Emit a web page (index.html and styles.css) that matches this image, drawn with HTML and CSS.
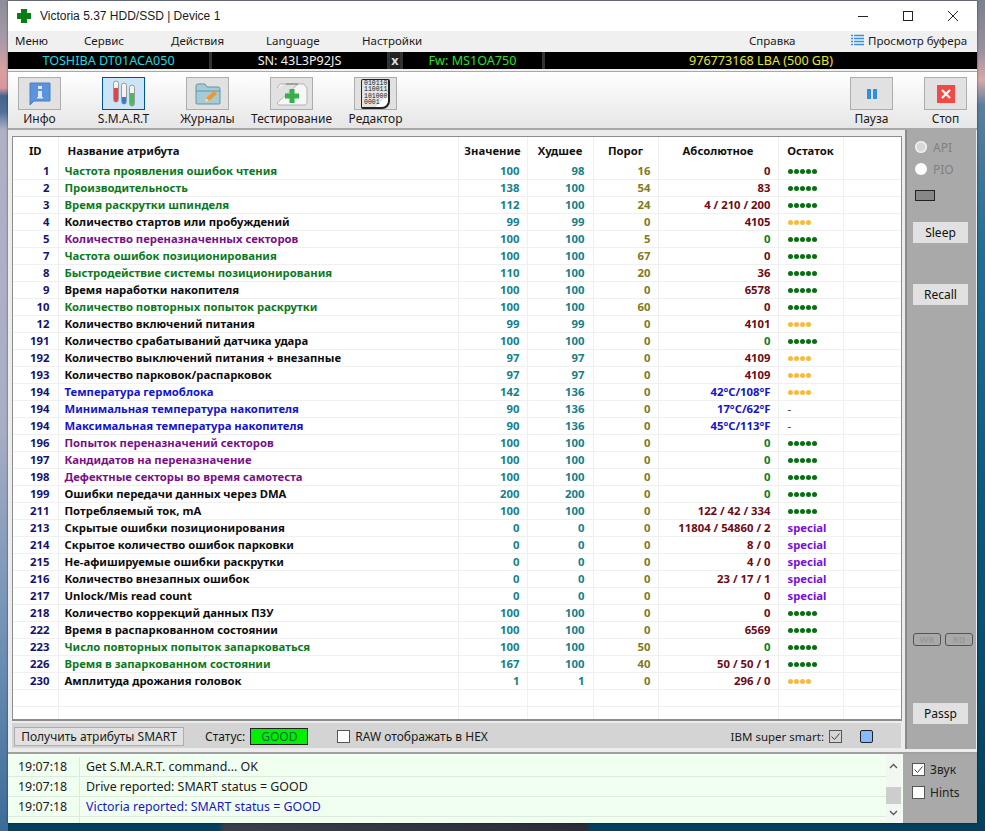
FILE: index.html
```html
<!doctype html>
<html>
  <head>
    <meta charset="utf-8">
    <title>Victoria 5.37 HDD/SSD | Device 1</title>
    <link rel="stylesheet" href="styles.css">
  </head>
  <body>
    <div class="window">
      <div class="titlebar">
        <svg class="app-icon" width="16" height="16" viewBox="0 0 16 16"><path d="M5 1h6v4h4v6h-4v4H5v-4H1V5h4z" fill="#0a7d14"/></svg>
        <span class="title-text">Victoria 5.37 HDD/SSD | Device 1</span>
        <div class="win-buttons">
          <svg width="12" height="12" viewBox="0 0 12 12"><path d="M1 6.5h10" stroke="#222" fill="none"/></svg>
          <svg width="12" height="12" viewBox="0 0 12 12"><rect x="1.5" y="1.5" width="9" height="9" stroke="#222" fill="none"/></svg>
          <svg width="12" height="12" viewBox="0 0 12 12"><path d="M1 1l10 10M11 1L1 11" stroke="#222" fill="none"/></svg>
        </div>
      </div>

      <div class="menubar">
        <span class="m-menu">Меню</span>
        <span class="m-service">Сервис</span>
        <span class="m-actions">Действия</span>
        <span class="m-lang">Language</span>
        <span class="m-settings">Настройки</span>
        <span class="m-help">Справка</span>
        <svg class="buffer-icon" width="13" height="13" viewBox="0 0 13 13"><path d="M0 1.5h2M3 1.5h10M0 4.5h2M3 4.5h10M0 7.5h2M3 7.5h10M0 10.5h2M3 10.5h10" stroke="#3a8fe0" stroke-width="1.4" fill="none"/></svg>
        <span>Просмотр буфера</span>
      </div>

      <div class="drivebar">
        <div class="d-model">TOSHIBA DT01ACA050</div>
        <div class="d-serial">SN: 43L3P92JS</div>
        <div class="d-x">x</div>
        <div class="d-fw">Fw: MS1OA750</div>
        <div class="d-lba">976773168 LBA (500 GB)</div>
      </div>

      <div class="toolbar">
        <div class="tool tool-info">
          <div class="tool-btn">
            <svg width="22" height="24" viewBox="0 0 22 24"><path d="M1 1h20v18H5l-4 4z" fill="#5b93dc" stroke="#4a7fc4"/><rect x="9" y="4" width="4" height="3" fill="#dce9f8"/><rect x="9" y="9" width="4" height="7" fill="#dce9f8"/><rect x="8" y="15" width="6" height="1.5" fill="#dce9f8"/></svg>
          </div>
          <span>Инфо</span>
        </div>
        <div class="tool tool-smart">
          <div class="tool-btn active">
            <svg width="24" height="28" viewBox="0 0 24 28">
              <rect x="1.5" y="1" width="5" height="21" rx="2.5" fill="#f4f4f4" stroke="#9a9a9a"/>
              <path d="M2 8h4v12a2 2 0 0 1-4 0z" fill="#e0454a"/>
              <rect x="9.5" y="3" width="5" height="21" rx="2.5" fill="#f4f4f4" stroke="#9a9a9a"/>
              <path d="M10 17h4v5a2 2 0 0 1-4 0z" fill="#2f7fd8"/>
              <rect x="17.500" y="5" width="5" height="21" rx="2.5" fill="#f4f4f4" stroke="#9a9a9a"/>
              <path d="M18 13h4v11a2 2 0 0 1-4 0z" fill="#4fb85a"/>
            </svg>
          </div>
          <span>S.M.A.R.T</span>
        </div>
        <div class="tool tool-logs">
          <div class="tool-btn">
            <svg width="26" height="24" viewBox="0 0 26 24">
              <path d="M1 4q0-2 2-2h7l2 3h11q2 0 2 2v14q0 1-1 1H2q-1 0-1-1z" fill="#a6cbd6" stroke="#5d97a8"/>
              <path d="M1 9h24" stroke="#5d97a8"/>
              <path d="M10 20l1-4 8-7 3 3-8 7z" fill="#f2962f"/>
              <path d="M10 20l1-4 3 3z" fill="#fbe0b4"/>
            </svg>
          </div>
          <span>Журналы</span>
        </div>
        <div class="tool tool-test">
          <div class="tool-btn">
            <svg width="32" height="26" viewBox="0 0 32 26">
              <path d="M1 7l3-4h6M22 3h6l3 4v15l-2 2H3l-2-2z" fill="#f6f6f6" stroke="#9c9c9c" stroke-width=".7"/>
              <path d="M10 3h12" stroke="#777" stroke-width="1.2"/>
              <path d="M13.500 8h5v4.500H23v5h-4.500V22h-5v-4.500H9v-5h4.500z" fill="#35b04a"/>
            </svg>
          </div>
          <span>Тестирование</span>
        </div>
        <div class="tool tool-editor">
          <div class="tool-btn">
            <div class="hex-sheet">010110<br>110011<br>101000<br>0001</div>
          </div>
          <span>Редактор</span>
        </div>
        <div class="tool tool-pause">
          <div class="tool-btn">
            <svg width="12" height="12" viewBox="0 0 12 12"><path d="M1 1h4v10H1zM7 1h4v10H7z" fill="#2f8fe0"/></svg>
          </div>
          <span>Пауза</span>
        </div>
        <div class="tool tool-stop">
          <div class="tool-btn">
            <svg width="18" height="18" viewBox="0 0 18 18"><rect width="18" height="18" fill="#ef4a45"/><path d="M5 5l8 8M13 5l-8 8" stroke="#fff" stroke-width="2.200"/></svg>
          </div>
          <span>Стоп</span>
        </div>
      </div>

      <div class="main">
        <div class="left-col">
          <div class="table-wrap">
            <table class="smart">
              <colgroup>
                <col class="c-id"><col class="c-name"><col class="c-val"><col class="c-worst"><col class="c-thr"><col class="c-raw"><col class="c-rest"><col>
              </colgroup>
              <thead>
                <tr><th>ID</th><th class="h-name">Название атрибута</th><th>Значение</th><th>Худшее</th><th>Порог</th><th>Абсолютное</th><th>Остаток</th><th class="h-end"></th></tr>
              </thead>
              <tbody id="rows"></tbody>
            </table>
          </div>
          <div class="statusrow">
            <button class="get-btn">Получить атрибуты SMART</button>
            <span class="status-label">Статус:</span>
            <span class="status-good">GOOD</span>
            <label class="hex-check"><span class="box"></span>RAW отображать в HEX</label>
            <label class="ibm-check">IBM super smart:<span class="box checked small"><svg width="13" height="13" viewBox="0 0 13 13"><path d="M2.500 6.500l3 3 5-6" stroke="#444" fill="none"/></svg></span></label>
            <span class="blue-swatch"></span>
          </div>
        </div>
        <div class="sidepanel">
          <div class="radio-row"><span class="radio dim"></span>API</div>
          <div class="radio-row"><span class="radio"></span>PIO</div>
          <div class="led"></div>
          <div class="side-btn sleep">Sleep</div>
          <div class="side-btn recall">Recall</div>
          <div class="wr-rd"><span>WR</span><span>RD</span></div>
          <div class="side-btn passp">Passp</div>
        </div>
      </div>

      <div class="bottom">
        <div class="log">
          <div class="log-lines">
            <div class="log-line"><span class="log-time">19:07:18</span><span class="log-msg">Get S.M.A.R.T. command... OK</span></div>
            <div class="log-line"><span class="log-time">19:07:18</span><span class="log-msg">Drive reported: SMART status = GOOD</span></div>
            <div class="log-line"><span class="log-time">19:07:18</span><span class="log-msg blue">Victoria reported: SMART status = GOOD</span></div>
            <div class="log-line"><span class="log-time"></span><span class="log-msg"></span></div>
          </div>
          <div class="scrollbar">
            <svg width="9" height="6" viewBox="0 0 9 6"><path d="M1 5l3.500-3.500L8 5" stroke="#555" stroke-width="1.300" fill="none"/></svg>
            <div class="thumb"></div>
            <svg width="9" height="6" viewBox="0 0 9 6"><path d="M1 1l3.500 3.500L8 1" stroke="#555" stroke-width="1.300" fill="none"/></svg>
          </div>
        </div>
        <div class="options">
          <label><span class="box checked"><svg width="13" height="13" viewBox="0 0 13 13"><path d="M2.500 6.500l3 3 5-6" stroke="#444" fill="none"/></svg></span>Звук</label>
          <label><span class="box"></span>Hints</label>
        </div>
      </div>
    </div>
    <script src="rows.js"></script>
  </body>
</html>
```

FILE: rows.js
```js
(function() {
  // id, name, colour, value, worst, threshold, raw, raw colour, remaining
  var data = [
    [1, 'Частота проявления ошибок чтения', 'g', 100, 98, 16, '0', 'r', 5],
    [2, 'Производительность', 'g', 138, 100, 54, '83', 'r', 5],
    [3, 'Время раскрутки шпинделя', 'g', 112, 100, 24, '4 / 210 / 200', 'r', 5],
    [4, 'Количество стартов или пробуждений', 'k', 99, 99, 0, '4105', 'r', 4],
    [5, 'Количество переназначенных секторов', 'p', 100, 100, 5, '0', 'g', 5],
    [7, 'Частота ошибок позиционирования', 'g', 100, 100, 67, '0', 'r', 5],
    [8, 'Быстродействие системы позиционирования', 'g', 110, 100, 20, '36', 'r', 5],
    [9, 'Время наработки накопителя', 'k', 100, 100, 0, '6578', 'r', 5],
    [10, 'Количество повторных попыток раскрутки', 'g', 100, 100, 60, '0', 'r', 5],
    [12, 'Количество включений питания', 'k', 99, 99, 0, '4101', 'r', 4],
    [191, 'Количество срабатываний датчика удара', 'k', 100, 100, 0, '0', 'g', 5],
    [192, 'Количество выключений питания + внезапные', 'k', 97, 97, 0, '4109', 'r', 4],
    [193, 'Количество парковок/распарковок', 'k', 97, 97, 0, '4109', 'r', 4],
    [194, 'Температура гермоблока', 'b', 142, 136, 0, '42°C/108°F', 'b', 4],
    [194, 'Минимальная температура накопителя', 'b', 90, 136, 0, '17°C/62°F', 'b', '-'],
    [194, 'Максимальная температура накопителя', 'b', 90, 136, 0, '45°C/113°F', 'b', '-'],
    [196, 'Попыток переназначений секторов', 'p', 100, 100, 0, '0', 'g', 5],
    [197, 'Кандидатов на переназначение', 'p', 100, 100, 0, '0', 'g', 5],
    [198, 'Дефектные секторы во время самотеста', 'p', 100, 100, 0, '0', 'g', 5],
    [199, 'Ошибки передачи данных через DMA', 'k', 200, 200, 0, '0', 'g', 5],
    [211, 'Потребляемый ток, mA', 'k', 100, 100, 0, '122 / 42 / 334', 'r', 5],
    [213, 'Скрытые ошибки позиционирования', 'k', 0, 0, 0, '11804 / 54860 / 2', 'r', 's'],
    [214, 'Скрытое количество ошибок парковки', 'k', 0, 0, 0, '8 / 0', 'r', 's'],
    [215, 'Не-афишируемые ошибки раскрутки', 'k', 0, 0, 0, '4 / 0', 'r', 's'],
    [216, 'Количество внезапных ошибок', 'k', 0, 0, 0, '23 / 17 / 1', 'r', 's'],
    [217, 'Unlock/Mis read count', 'k', 0, 0, 0, '0', 'r', 's'],
    [218, 'Количество коррекций данных ПЗУ', 'k', 100, 100, 0, '0', 'r', 5],
    [222, 'Время в распаркованном состоянии', 'k', 100, 100, 0, '6569', 'r', 5],
    [223, 'Число повторных попыток запарковаться', 'g', 100, 100, 50, '0', 'g', 5],
    [226, 'Время в запаркованном состоянии', 'g', 167, 100, 40, '50 / 50 / 1', 'r', 5],
    [230, 'Амплитуда дрожания головок', 'k', 1, 1, 0, '296 / 0', 'r', 4]
  ];

  function dots(n) {
    if (n === 's') return '<span class="special">special</span>';
    if (n === '-') return '<span class="dash">-</span>';
    var cls = n === 5 ? 'dots five' : 'dots four';
    var html = '<span class="' + cls + '">';
    for (var i = 0; i < n; i++) html += '<i></i>';
    return html + '</span>';
  }

  var html = '';
  data.forEach(function (r) {
    html += '<tr>' +
      '<td class="id">' + r[0] + '</td>' +
      '<td class="name ' + r[2] + '">' + r[1] + '</td>' +
      '<td class="val val-a">' + r[3] + '</td>' +
      '<td class="val val-b">' + r[4] + '</td>' +
      '<td class="thr">' + r[5] + '</td>' +
      '<td class="raw raw-' + r[7] + '">' + r[6] + '</td>' +
      '<td class="rest">' + dots(r[8]) + '</td>' +
      '<td></td></tr>';
  });
  for (var i = 0; i < 2; i++) {
    html += '<tr class="empty"><td></td><td></td><td></td><td></td><td></td><td></td><td></td><td></td></tr>';
  }
  document.getElementById('rows').innerHTML = html;
})();
```

FILE: styles.css
```css
html, body {
  margin: 0;
  padding: 0;
  height: 100%;
}

body {
  width: 985px;
  height: 831px;
  overflow: hidden;
  padding: 1px 8px 0 8px;
  box-sizing: border-box;
  font-family: "Noto Sans", "Liberation Sans", sans-serif;
  font-size: 12px;
  color: #1a1a1a;
  background:
    linear-gradient(90deg, transparent 218px, #3a3f4c 225px, #2a2d38 585px, transparent 592px) 0 100% / 100% 9px no-repeat,
    linear-gradient(180deg, #8d8c9a 0, #a89aa8 40px, #d9a0a0 70px, #d8989c 88px, #44648c 96px, #50709a 112px, #b0b0c6 130px, #a9aec6 420px, #6d8fb4 650px, #3d6c98 830px) 0 0 / 8px 100% no-repeat,
    linear-gradient(180deg, #7b8090 0, #9a8fa0 50px, #d8a8a8 80px, #5a7fa0 105px, #1f6f98 250px, #0a5a80 500px, #04405f 831px);
}

.window {
  width: 969px;
  height: 822px;
  background: #f0f0f0;
  box-shadow: 0 0 2px rgba(0, 0, 0, .6);
  overflow: hidden;
}

/* title and menu */
.titlebar {
  height: 30px;
  background: #fff;
  display: flex;
  align-items: center;
  padding-left: 8px;
  font-family: "Liberation Sans", sans-serif;
  font-size: 12px;
}

.app-icon {
  margin-right: 8px;
}

.win-buttons {
  margin-left: auto;
  display: flex;
  gap: 33px;
  padding-right: 18px;
}

.menubar {
  height: 21px;
  box-sizing: border-box;
  padding: 0 0 3px 7px;
  display: flex;
  align-items: center;
  font-size: 11.500px;
}

.menubar span { white-space: nowrap; }
.m-menu { width: 69px; }
.m-service { width: 87px; }
.m-actions { width: 95px; }
.m-lang { width: 96px; }
.m-settings { width: 387px; }
.m-help { width: 102px; }
.buffer-icon { margin-right: 4px; }

.drivebar {
  height: 17px;
  background: #000;
  display: flex;
  font-size: 12.600px;
  line-height: 17px;
  text-align: center;
  white-space: nowrap;
}

.drivebar div {
  border-right: 3px solid #333;
  box-sizing: border-box;
}

.d-model { width: 204px; color: #22d8e0; }
.d-serial { width: 178px; color: #f0f0f0; }
.d-x { width: 13px; color: #ddd; background: #222; font-weight: bold; }
.d-fw { width: 142px; color: #28e028; }
.d-lba { flex: 1; color: #e6e632; border-right: 0 !important; }

/* toolbar */
.toolbar {
  height: 56px;
  margin-top: 2px;
  border-top: 1px solid #a8a8a8;
  border-bottom: 2px solid #a8a8a8;
  background: linear-gradient(#fff, #e6e6e6);
  display: flex;
  box-sizing: content-box;
}

.tool {
  display: flex;
  flex-direction: column;
  align-items: center;
  width: 43px;
  padding-top: 5px;
  font-size: 12px;
  line-height: 14px;
  white-space: nowrap;
}

.tool span { margin-top: 2px; }

.tool-btn {
  width: 43px;
  height: 33px;
  flex: none;
  box-sizing: border-box;
  border: 1px solid #adadad;
  background: #e1e1e1;
  display: flex;
  align-items: center;
  justify-content: center;
}

.tool-btn.active {
  background: #cce4f7;
  border-color: #005499;
}

.tool-info { margin-left: 10px; }
.tool-smart { margin-left: 41px; }
.tool-logs { margin-left: 41px; }
.tool-test { margin-left: 41px; }
.tool-editor { margin-left: 41px; }
.tool-pause { margin-left: auto; }
.tool-stop { margin-left: 31px; margin-right: 10px; }

.hex-sheet {
  width: 29px;
  height: 30px;
  box-sizing: border-box;
  background: linear-gradient(135deg, #e4e4e4 76%, #fff 77%);
  border: 1px solid #222;
  border-right-width: 2px;
  border-bottom-width: 2px;
  border-radius: 2px 2px 8px 2px;
  font-family: "Liberation Mono", monospace;
  font-size: 6.500px;
  line-height: 6.500px;
  color: #222;
  padding: 1px 0 0 2px;
  overflow: hidden;
}

/* main area */
.main {
  height: 622px;
  display: flex;
  background: #ececec;
}

.left-col {
  width: 897px;
  flex: none;
}

.table-wrap {
  margin: 6px 0 0 4px;
  width: 890px;
  height: 585px;
  box-sizing: border-box;
  border: 1px solid #8c8c8c;
  border-bottom-width: 2px;
  background: #fff;
  overflow: hidden;
}

.smart {
  width: 888px;
  table-layout: fixed;
  border-collapse: collapse;
  font-family: "Noto Sans", sans-serif;
  font-size: 11.300px;
  font-weight: bold;
}

.c-id { width: 45px; }
.c-name { width: 400px; }
.c-val { width: 69px; }
.c-worst { width: 66px; }
.c-thr { width: 65px; }
.c-raw { width: 120px; }
.c-rest { width: 65px; }

.smart th {
  height: 26px;
  padding: 0;
  font-size: 11.300px;
  color: #111;
  text-align: center;
  border-right: 1px solid #f0f0f0;
  background: #fff;
}

.smart th.h-name {
  text-align: left;
  padding-left: 9px;
}

.smart th.h-end { border-right: 0; }

.smart td {
  height: 16px;
  padding: 0;
  line-height: 16px;
  border-right: 1px solid #f0f0f0;
  border-bottom: 1px solid #f0f0f0;
  white-space: nowrap;
  overflow: hidden;
}

.smart td:last-child { border-right: 0; }

.smart td.id {
  text-align: right;
  color: #14146e;
  padding-right: 8px;
}

.smart td.name { padding-left: 6px; }

.g { color: #0b7a1c; }
.k { color: #0c0c0c; }
.p { color: #7a0f86; }
.b { color: #1414c8; }

.smart td.val {
  text-align: right;
  color: #14808a;
}

.smart td.val-a { padding-right: 7px; }
.smart td.val-b { padding-right: 8px; }

.smart td.thr {
  text-align: right;
  color: #807a1e;
  padding-right: 7px;
}

.smart td.raw {
  text-align: right;
  padding-right: 7px;
}

.raw-r { color: #6e0a14; }
.raw-g { color: #0b7a1c; }
.raw-b { color: #1414c8; }

.smart td.rest { padding-left: 9px; }

.dots {
  display: flex;
  gap: 1px;
}

.dots i {
  width: 5px;
  height: 5px;
  border-radius: 50%;
  background: #0a6e14;
}

.dots.four i { background: #f7bb3c; }

.special { color: #7a0fd8; }
.dash { color: #333; font-weight: normal; }

.statusrow {
  height: 25px;
  margin: 2px 0 0 4px;
  padding-top: 2px;
  width: 889px;
  box-sizing: border-box;
  background: #d4d4d4;
  display: flex;
  align-items: center;
  font-size: 12px;
  white-space: nowrap;
}

.get-btn {
  height: 19px;
  width: 170px;
  margin: 0 0 0 2px;
  padding: 0;
  font: inherit;
  color: inherit;
  background: #e1e1e1;
  border: 1px solid #adadad;
}

.status-label { margin-left: 21px; }

.status-good {
  margin-left: 5px;
  width: 58px;
  height: 17px;
  box-sizing: border-box;
  border: 1px solid #222;
  background: #00f000;
  color: #064;
  text-align: center;
  line-height: 15px;
}

.box {
  width: 13px;
  height: 13px;
  flex: none;
  box-sizing: border-box;
  border: 1px solid #555;
  background: #fff;
  display: inline-flex;
  align-items: center;
  justify-content: center;
}

.box svg { margin: -1px; flex: none; }

.hex-check, .ibm-check { display: flex; align-items: center; }
.hex-check { margin-left: 29px; }
.hex-check .box { margin-right: 5px; }
.ibm-check { margin-left: auto; font-size: 11.500px; }
.ibm-check .box { margin-left: 5px; background: transparent; }

.blue-swatch {
  width: 13px;
  height: 13px;
  box-sizing: border-box;
  border: 1px solid #222;
  border-radius: 2px;
  background: #86bcff;
  margin: 0 28px 0 18px;
}

/* side panel */
.sidepanel {
  width: 71px;
  height: 619px;
  flex: none;
  box-sizing: border-box;
  background: #a9a9a9;
  border-left: 2px solid #8a8a8a;
  padding: 6px 0 0 6px;
  color: #808080;
  font-size: 12px;
  display: flex;
  flex-direction: column;
}

.radio-row {
  height: 22px;
  display: flex;
  align-items: center;
  gap: 6px;
  margin-left: 2px;
}

.radio {
  width: 12px;
  height: 12px;
  border-radius: 50%;
  background: #fff;
}

.radio.dim { background: #d8d8d8; box-shadow: inset 0 0 0 1.500px #f0f0f0; }

.led {
  width: 18px;
  height: 9px;
  margin: 10px 0 0 2px;
  border: 1px solid #222;
  background: #888;
}

.side-btn {
  width: 55px;
  height: 21px;
  background: #e1e1e1;
  color: #111;
  text-align: center;
  line-height: 21px;
}

.sleep { margin-top: 21px; }
.recall { margin-top: 41px; }
.passp { margin-top: 57px; }

.wr-rd {
  margin-top: 328px;
  display: flex;
  gap: 4px;
  font-size: 9px;
  font-weight: bold;
  color: #999;
}

.wr-rd span {
  width: 26px;
  height: 11px;
  line-height: 11px;
  text-align: center;
  border: 1px solid #555;
  border-radius: 3px;
}

/* log */
.bottom {
  height: 70px;
  display: flex;
  border-top: 2px solid #a0a0a0;
}

.log {
  width: 895px;
  flex: none;
  background: #f1fff1;
  display: flex;
}

.log-lines {
  flex: 1;
  padding-top: 3px;
}

.log-line {
  height: 19px;
  border-bottom: 1px solid #dcebdc;
  line-height: 19px;
  display: flex;
  font-size: 12.400px;
}

.log-time {
  width: 72px;
  box-sizing: border-box;
  padding-left: 10px;
  border-right: 1px solid #dcebdc;
}

.log-msg { padding-left: 6px; }
.log-msg.blue { color: #1818c0; }

.scrollbar {
  width: 15px;
  height: 68px;
  margin-right: 2px;
  background: #f2f7f2;
  display: flex;
  flex-direction: column;
  align-items: center;
  justify-content: space-between;
  padding: 9px 0 6px;
  box-sizing: border-box;
}

.thumb {
  width: 15px;
  height: 17px;
  background: #cdcdcd;
  margin-top: 12px;
}

.options {
  flex: 1;
  background: #a9a9a9;
  padding: 4px 0 0 9px;
  font-size: 12px;
  color: #222;
}

.options label {
  display: flex;
  align-items: center;
  gap: 5px;
  height: 23px;
}
```
